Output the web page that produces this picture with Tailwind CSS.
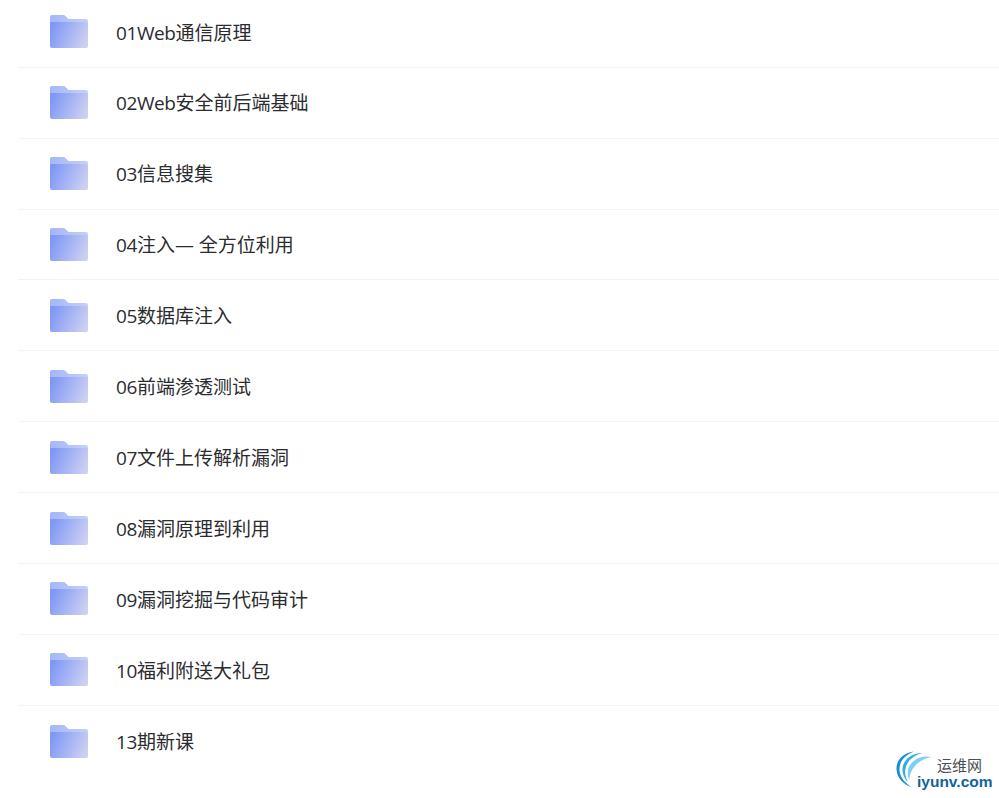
<!DOCTYPE html>
<html lang="zh-CN">
<head>
    <meta charset="UTF-8">
    <title>文件列表</title>
    <script src="https://cdn.jsdelivr.net/npm/@tailwindcss/browser@4"></script>
</head>
<body class="relative h-[798px] overflow-hidden bg-white font-['Open_Sans','Noto_Sans_CJK_SC',sans-serif] text-[19px] text-[#2b2c30]">
    <!-- shared folder gradients -->
    <svg width="0" height="0" class="absolute">
        <defs>
            <linearGradient id="folderBody" x1="0" y1="0.35" x2="1" y2="0.65">
                <stop offset="0" stop-color="#7f98f6"/>
                <stop offset="1" stop-color="#cdd0f1"/>
            </linearGradient>
            <linearGradient id="folderBack" x1="0" y1="0" x2="1" y2="0">
                <stop offset="0" stop-color="#a3b6f8"/>
                <stop offset="1" stop-color="#c6d0f8"/>
            </linearGradient>
            <symbol id="folder" viewBox="0 0 38 33">
                <path d="M2 0h11c1 0 2 .5 3 1.400l2.500 2.600H36a2 2 0 0 1 2 2v6H0V2a2 2 0 0 1 2-2z" fill="url(#folderBack)"/>
                <path d="M0 7h36a2 2 0 0 1 2 2V31a2 2 0 0 1-2 2H2a2 2 0 0 1-2-2z" fill="url(#folderBody)"/>
            </symbol>
        </defs>
    </svg>

    <ul class="pl-[18px] -mt-[3.1px]">
        <li class="flex h-[70.9px] items-center border-b border-[#f3f3f5] pl-[32px]">
            <svg width="38" height="33" class="shrink-0"><use href="#folder"/></svg>
            <span class="ml-[28px] pt-[2px]"><span class="tracking-[-0.4px]">01Web</span>通信原理</span>
        </li>
        <li class="flex h-[70.9px] items-center border-b border-[#f3f3f5] pl-[32px]">
            <svg width="38" height="33" class="shrink-0"><use href="#folder"/></svg>
            <span class="ml-[28px] pt-[2px]"><span class="tracking-[-0.4px]">02Web</span>安全前后端基础</span>
        </li>
        <li class="flex h-[70.9px] items-center border-b border-[#f3f3f5] pl-[32px]">
            <svg width="38" height="33" class="shrink-0"><use href="#folder"/></svg>
            <span class="ml-[28px] pt-[2px]"><span class="tracking-[-0.4px]">03</span>信息搜集</span>
        </li>
        <li class="flex h-[70.9px] items-center border-b border-[#f3f3f5] pl-[32px]">
            <svg width="38" height="33" class="shrink-0"><use href="#folder"/></svg>
            <span class="ml-[28px] pt-[2px]"><span class="tracking-[-0.4px]">04</span>注入— 全方位利用</span>
        </li>
        <li class="flex h-[70.9px] items-center border-b border-[#f3f3f5] pl-[32px]">
            <svg width="38" height="33" class="shrink-0"><use href="#folder"/></svg>
            <span class="ml-[28px] pt-[2px]"><span class="tracking-[-0.4px]">05</span>数据库注入</span>
        </li>
        <li class="flex h-[70.9px] items-center border-b border-[#f3f3f5] pl-[32px]">
            <svg width="38" height="33" class="shrink-0"><use href="#folder"/></svg>
            <span class="ml-[28px] pt-[2px]"><span class="tracking-[-0.4px]">06</span>前端渗透测试</span>
        </li>
        <li class="flex h-[70.9px] items-center border-b border-[#f3f3f5] pl-[32px]">
            <svg width="38" height="33" class="shrink-0"><use href="#folder"/></svg>
            <span class="ml-[28px] pt-[2px]"><span class="tracking-[-0.4px]">07</span>文件上传解析漏洞</span>
        </li>
        <li class="flex h-[70.9px] items-center border-b border-[#f3f3f5] pl-[32px]">
            <svg width="38" height="33" class="shrink-0"><use href="#folder"/></svg>
            <span class="ml-[28px] pt-[2px]"><span class="tracking-[-0.4px]">08</span>漏洞原理到利用</span>
        </li>
        <li class="flex h-[70.9px] items-center border-b border-[#f3f3f5] pl-[32px]">
            <svg width="38" height="33" class="shrink-0"><use href="#folder"/></svg>
            <span class="ml-[28px] pt-[2px]"><span class="tracking-[-0.4px]">09</span>漏洞挖掘与代码审计</span>
        </li>
        <li class="flex h-[70.9px] items-center border-b border-[#f3f3f5] pl-[32px]">
            <svg width="38" height="33" class="shrink-0"><use href="#folder"/></svg>
            <span class="ml-[28px] pt-[2px]"><span class="tracking-[-0.4px]">10</span>福利附送大礼包</span>
        </li>
        <li class="flex h-[70.9px] items-center pl-[32px]">
            <svg width="38" height="33" class="shrink-0"><use href="#folder"/></svg>
            <span class="ml-[28px] pt-[2px]"><span class="tracking-[-0.4px]">13</span>期新课</span>
        </li>
    </ul>

    <!-- watermark -->
    <div class="absolute left-[895px] top-[750px] h-[46px] w-[104px]">
        <svg width="42" height="42" viewBox="0 0 42 42" class="absolute left-0 top-0">
            <path d="M19 1.500C8 3 1 10 1.500 19.500 2 28 8 34 17 37.500 10 33 4.500 27 4.500 19.500 4.500 11 10 5 19 1.500z" fill="#1b8fd0"/>
            <path d="M28 3C16 3 8 10 7.500 19c-.2 5 2 10 6 13.500C10.500 28 9.500 23 10.500 18.500 12.500 10 19 5 28 3z" fill="#35ace0"/>
            <path d="M36 7C25 4.500 15 11 13 20c-.6 3.500 0 7 1.500 10-.2-9 7-20 21.500-23z" fill="#7fd0ee"/>
        </svg>
        <span class="absolute left-[42px] top-[5px] whitespace-nowrap font-['Noto_Sans_CJK_SC',sans-serif] text-[15px] leading-[20px] text-[#4a4f55]">运维网</span>
        <span class="absolute left-[22px] top-[23px] whitespace-nowrap font-['Liberation_Sans',sans-serif] text-[15.500px] leading-[18px] font-bold text-[#12639c]">iyunv.com</span>
    </div>
</body>
</html>
